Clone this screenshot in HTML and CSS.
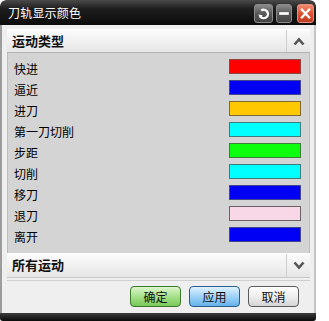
FILE: index.html
```html
<!DOCTYPE html>
<html lang="zh">
<head>
<meta charset="utf-8">
<title>刀轨显示颜色</title>
<link rel="stylesheet" href="styles.css">
</head>
<body>
<div class="dialog">
  <div class="titlebar">
    <span class="title">刀轨显示颜色</span>
    <div class="tb-buttons">
      <span class="tb-btn restore">
        <svg width="19" height="19" viewBox="0 0 19 19"><path d="M7 6.2 A4.7 4.7 0 1 1 6 12.8" fill="none" stroke="#fff" stroke-width="2.6"/><path d="M3.8 10.6 L8.6 11.4 L5.6 15 Z" fill="#fff"/></svg>
      </span>
      <span class="tb-btn mini">
        <svg width="16" height="19" viewBox="0 0 16 19"><rect x="2.5" y="8" width="11" height="3" fill="#fff"/></svg>
      </span>
      <span class="tb-btn close">
        <svg width="17" height="19" viewBox="0 0 17 19"><path d="M3.5 4 L13.5 15 M13.5 4 L3.5 15" stroke="#fff" stroke-width="2.6"/></svg>
      </span>
    </div>
  </div>
  <div class="body">
    <div class="section-head">
      <span class="section-title">运动类型</span>
      <span class="chev"><svg width="12" height="9" viewBox="0 0 12 9"><path d="M1.5 7.5 L6 2.5 L10.5 7.5" fill="none" stroke="#555" stroke-width="2.6"/></svg></span>
    </div>
    <div class="panel">
      <div class="row"><span>快进</span><span class="sw" style="background:#ff0000;border-color:#8a4545"></span></div>
      <div class="row"><span>逼近</span><span class="sw" style="background:#0000f4;border-color:#46468a"></span></div>
      <div class="row"><span>进刀</span><span class="sw" style="background:#ffc800;border-color:#7d6a38"></span></div>
      <div class="row"><span>第一刀切削</span><span class="sw" style="background:#00ffff;border-color:#3f7d7d"></span></div>
      <div class="row"><span>步距</span><span class="sw" style="background:#0cff0c;border-color:#3f7d3f"></span></div>
      <div class="row"><span>切削</span><span class="sw" style="background:#00ffff;border-color:#3f7d7d"></span></div>
      <div class="row"><span>移刀</span><span class="sw" style="background:#0000f4;border-color:#46468a"></span></div>
      <div class="row"><span>退刀</span><span class="sw" style="background:#f8d8e6;border-color:#6a6266"></span></div>
      <div class="row"><span>离开</span><span class="sw" style="background:#0000f4;border-color:#46468a"></span></div>
    </div>
    <div class="section-head second">
      <span class="section-title">所有运动</span>
      <span class="chev"><svg width="12" height="9" viewBox="0 0 12 9"><path d="M1.5 1.5 L6 6.5 L10.5 1.5" fill="none" stroke="#555" stroke-width="2.6"/></svg></span>
    </div>
    <div class="buttons">
      <button class="btn ok">确定</button>
      <button class="btn apply">应用</button>
      <button class="btn cancel">取消</button>
    </div>
  </div>
  <div class="bottombar"></div>
</div>
</body>
</html>
```

FILE: styles.css
```css
html, body {
  margin: 0;
  padding: 0;
  background: #ffffff;
}
body {
  width: 329px;
  height: 321px;
  overflow: hidden;
  font-family: "Noto Sans CJK SC", "Noto Sans", sans-serif;
}
.dialog {
  width: 316px;
  height: 321px;
  display: flex;
  flex-direction: column;
  background: #ededed;
  border-radius: 6px 6px 0 0;
  overflow: hidden;
  box-sizing: border-box;
}
.titlebar {
  height: 25px;
  flex: none;
  display: flex;
  align-items: center;
  justify-content: space-between;
  background: linear-gradient(#4a4a4a 0%, #1e1e1e 35%, #0c0c0c 100%);
  border-radius: 6px 6px 0 0;
  padding: 0 2px 0 8px;
}
.title {
  color: #ffffff;
  font-size: 12px;
  letter-spacing: 0.2px;
  line-height: 25px;
}
.tb-buttons {
  display: flex;
  align-items: center;
  margin-top: 1px;
}
.tb-btn {
  display: flex;
  align-items: center;
  justify-content: center;
  height: 19px;
  border-radius: 3px;
  border: 1px solid #8a8a8a;
  background: linear-gradient(#8a8a8a, #555555 55%, #444444);
  box-sizing: border-box;
}
.tb-btn.restore {
  width: 19px;
}
.tb-btn.mini {
  width: 16px;
  margin-left: 3px;
}
.tb-btn.close {
  width: 17px;
  margin-left: 5px;
  border-color: #e09080;
  background: linear-gradient(#f08a70, #d8502e 55%, #c03c20);
}
.body {
  flex: 1;
  display: flex;
  flex-direction: column;
  border-left: 2px solid #9c9c9c;
  border-right: 2px solid #c4c4c4;
  padding: 4px 4px 0 5px;
  background: #efefef;
}
.section-head {
  height: 22px;
  flex: none;
  display: flex;
  align-items: stretch;
  justify-content: space-between;
  background: linear-gradient(#fbfbfb, #e6e6e6);
  border-top: 1px solid #ffffff;
  border-bottom: 1px solid #b4b4b4;
}
.section-head.second {
  height: 23px;
  border-bottom: 1px solid #c8c8c8;
}
.section-title {
  font-weight: bold;
  font-size: 13px;
  line-height: 22px;
  padding-left: 5px;
  color: #111;
}
.chev {
  width: 23px;
  display: flex;
  align-items: center;
  justify-content: center;
  border-left: 1px solid #cfcfcf;
}
.panel {
  height: 200px;
  flex: none;
  box-sizing: border-box;
  background: #d4d4d4;
  border-left: 1px solid #bcbcbc;
  border-right: 1px solid #bcbcbc;
  padding: 3px 8px 0 6px;
}
.row {
  height: 21px;
  display: flex;
  align-items: center;
  justify-content: space-between;
  font-size: 12px;
  color: #000;
}
.row span:first-child {
  padding-top: 4px;
}
.sw {
  width: 70px;
  height: 13px;
  border: 1px solid #555;
}
.buttons {
  display: flex;
  justify-content: flex-end;
  gap: 8px;
  margin-top: 2px;
  border-top: 1px solid #d0d0d0;
  padding: 5px 11px 0 0;
}
.btn {
  width: 51px;
  height: 21px;
  border-radius: 4px;
  font-family: "Noto Sans CJK SC", sans-serif;
  font-size: 12px;
  line-height: 17px;
  padding: 0;
  color: #111;
  cursor: default;
}
.btn.ok {
  border: 1px solid #3b7a2c;
  background: linear-gradient(#dcf6cc, #a6e08a 50%, #78c858);
}
.btn.apply {
  border: 1px solid #2a5c8c;
  background: linear-gradient(#e0f2ff, #9fd2f6 50%, #64b2ec);
}
.btn.cancel {
  border: 1px solid #5a5a5a;
  background: linear-gradient(#ffffff, #eeeeee 50%, #d4d4d4);
}
.bottombar {
  height: 8px;
  flex: none;
  margin-top: auto;
  background: linear-gradient(#3c3c3c, #0a0a0a);
  border-radius: 0 0 3px 3px;
}
```
